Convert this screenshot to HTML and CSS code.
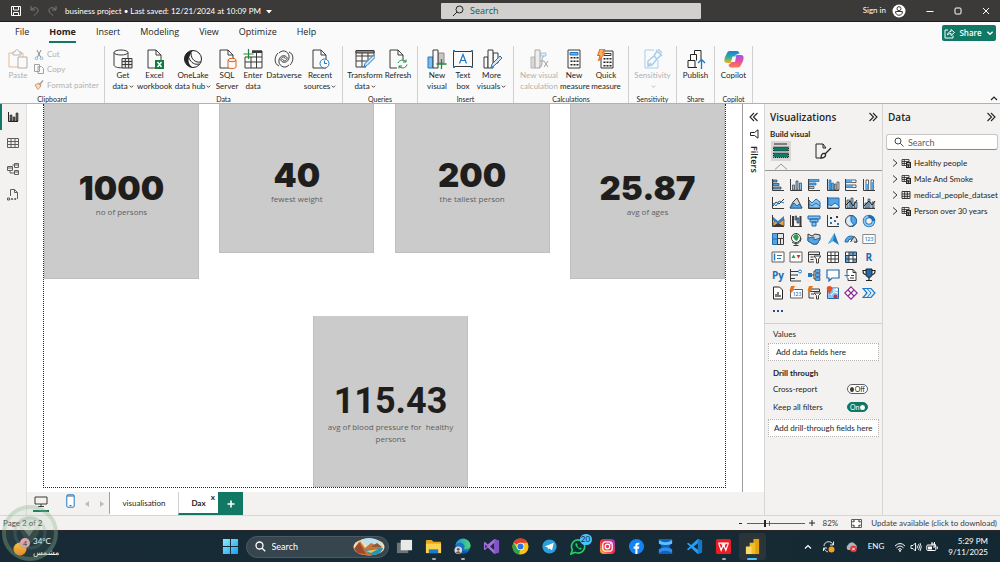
FILE: index.html
```html
<!DOCTYPE html>
<html lang="en">
<head>
<meta charset="utf-8">
<title>business project</title>
<link rel="stylesheet" href="styles.css">
</head>
<body>
<svg class="defs" aria-hidden="true">
  <defs>
    <linearGradient id="gWin" x1="0" y1="0" x2="1" y2="1"><stop offset="0" stop-color="#8fe9ff"/><stop offset="1" stop-color="#1a9ff0"/></linearGradient>
    <linearGradient id="gEdge" x1="0" y1="0" x2="1" y2="0"><stop offset="0" stop-color="#1b8fe0"/><stop offset="1" stop-color="#52d96b"/></linearGradient>
    <linearGradient id="gInsta" x1="0" y1="1" x2="1" y2="0"><stop offset="0" stop-color="#fdc04a"/><stop offset=".45" stop-color="#f2343f"/><stop offset="1" stop-color="#a12fd0"/></linearGradient>
    <linearGradient id="gCoA" x1="0" y1="0" x2="0" y2="1"><stop offset="0" stop-color="#1b7be8"/><stop offset=".5" stop-color="#2fae9a"/><stop offset="1" stop-color="#f4b41a"/></linearGradient>
    <linearGradient id="gCoB" x1="0" y1="0" x2="0" y2="1"><stop offset="0" stop-color="#9a55f5"/><stop offset=".5" stop-color="#e9509c"/><stop offset="1" stop-color="#ff7d45"/></linearGradient>
    <linearGradient id="gSun" x1="0" y1="0" x2="0" y2="1"><stop offset="0" stop-color="#ffc93a"/><stop offset="1" stop-color="#f2821c"/></linearGradient>
    <symbol id="axis" viewBox="0 0 14 14"><path d="M1.5 1v11.5H13" fill="none" stroke="#3b3a39"/></symbol>
    <symbol id="chev" viewBox="0 0 6 6"><path d="M1 2l2 2 2-2" fill="none" stroke="currentColor" stroke-width="1"/></symbol>
    <symbol id="dbl" viewBox="0 0 10 10"><path d="M1.500 1l4 4-4 4M5 1l4 4-4 4" fill="none" stroke="#252423" stroke-width="1.100"/></symbol>
    <symbol id="doc" viewBox="0 0 20 20"><path d="M3 1h8l5 5v13H3zM11 1v5h5" fill="#fafafa" stroke="#3b3a39"/></symbol>
    <symbol id="tree" viewBox="0 0 6 10"><path d="M1 1.500l4 3.500-4 3.500" fill="none" stroke="#3b3a39"/></symbol>
    <symbol id="tbl" viewBox="0 0 10 10"><path d="M1 1.500h8v7H1zM1 4h8M1 6.300h8M3.700 1.500v7M6.300 1.500v7" fill="none" stroke="#252423" stroke-width=".9"/></symbol>
    <symbol id="tblcalc" viewBox="0 0 10 10"><path d="M1 1.500h7v6H1zM1 3.500h7M1 5.500h7M3.300 1.500v6" fill="none" stroke="#252423" stroke-width=".8"/><path d="M5 4h5v6H5z" fill="#252423"/><path d="M6.200 5.500h2.600M6.200 7h1M8 7h1M6.200 8.500h1M8 8.500h1" stroke="#fff" stroke-width=".7"/></symbol>
  </defs>
</svg>

<header class="titlebar">
  <div class="title-left">
    <button class="bare" aria-label="Save"><svg width="12" height="12" viewBox="0 0 12 12" fill="none" stroke="#fff"><path d="M1.500 1.500h9v9h-9zM3.500 1.500v3.500h5V1.500M3.500 10.500V7.500h5v3"/></svg></button>
    <button class="bare" aria-label="Undo"><svg width="11" height="11" viewBox="0 0 11 11" fill="none" stroke="#7d7b79"><path d="M2 1v4h4M2 5c3-4 8-2 7 1-.4 1.500-2 3-4 4.500"/></svg></button>
    <button class="bare" aria-label="Redo"><svg width="11" height="11" viewBox="0 0 11 11" fill="none" stroke="#7d7b79"><path d="M9 1v4H5M9 5C6 1 1 3 2 6c.4 1.500 2 3 4 4.500"/></svg></button>
    <button class="bare file-name">business project • Last saved: 12/21/2024 at 10:09 PM <svg width="6" height="4" viewBox="0 0 6 4"><path d="M0 0h6L3 3.500z" fill="#fff"/></svg></button>
  </div>
  <label class="title-search">
    <svg width="12" height="12" viewBox="0 0 12 12" fill="none" stroke="#252423"><circle cx="7.500" cy="4.500" r="3.500"/><path d="M5 7l-4 4"/></svg>
    <input type="text" placeholder="Search" aria-label="Search">
  </label>
  <div class="title-right">
    <button class="bare signin">Sign in <svg width="14" height="14" viewBox="0 0 14 14"><circle cx="7" cy="7" r="6.500" fill="#fff"/><circle cx="7" cy="4.700" r="2" fill="none" stroke="#3b3a39"/><path d="M3.500 7.500h7c0 5-7 5-7 0z" fill="none" stroke="#3b3a39"/></svg></button>
    <button class="bare" aria-label="Minimize"><svg width="8" height="8" viewBox="0 0 8 8"><path d="M.5 4.500h7" stroke="#fff"/></svg></button>
    <button class="bare" aria-label="Maximize"><svg width="8" height="8" viewBox="0 0 8 8"><rect x="1" y="1" width="6" height="6" rx="1" fill="none" stroke="#fff"/></svg></button>
    <button class="bare" aria-label="Close"><svg width="8" height="8" viewBox="0 0 8 8"><path d="M1 1l6 6M7 1L1 7" stroke="#fff"/></svg></button>
  </div>
</header>

<nav class="menubar">
  <button class="menu">File</button><button class="menu active">Home</button><button class="menu">Insert</button><button class="menu">Modeling</button><button class="menu">View</button><button class="menu">Optimize</button><button class="menu">Help</button>
  <button class="share"><svg width="11" height="11" viewBox="0 0 11 11" fill="none" stroke="#fff"><path d="M4 2H1v8h8V7.500M3.500 7c.3-2.500 2-3.500 3.500-3.500V1.500l3.500 3-3.500 3v-2C5.500 5.500 4.500 6 3.500 7z"/></svg>Share<svg width="8" height="8"><use href="#chev"/></svg></button>
</nav>

<section class="ribbon">
  <div class="group clip">
    <div class="tools">
      <button class="tool off"><svg viewBox="0 0 20 20" fill="none"><path d="M10 18H1V4h4M11 4h4v4" stroke="#e9b98c"/><path d="M5 3h2c0-3 4-3 4 0h2v3H5z" stroke="#b9b7b5"/><path d="M10 8h9v11h-9z" fill="#fafafa" stroke="#b0aeac"/></svg>Paste</button>
      <div class="clip-list">
        <button class="mini"><svg viewBox="0 0 10 10" fill="none"><path d="M3 0l3.500 7M7 0L3.500 7" stroke="#8d8b89"/><circle cx="2.500" cy="8.300" r="1.300" stroke="#7eb4dc"/><circle cx="7.500" cy="8.300" r="1.300" stroke="#7eb4dc"/></svg>Cut</button>
        <button class="mini"><svg viewBox="0 0 10 10" fill="#fafafa" stroke="#a5a3a1"><path d="M.5.500h5v7h-5zM4 2.500h3.500l2 2v5H4z"/></svg>Copy</button>
        <button class="mini"><svg viewBox="0 0 10 10"><path d="M1 5l4-2 2 3-3 3.500z" fill="#f6dcc3" stroke="#dc9a66"/><path d="M5 3.500l2 2M6 4l3-3.500" stroke="#a5a3a1" stroke-width="1.500"/></svg>Format painter</button>
      </div>
    </div>
    <div class="group-name">Clipboard</div>
  </div>
  <div class="group">
    <div class="tools">
      <button class="tool w28"><svg viewBox="0 0 20 20" fill="none" stroke="#3b3a39"><ellipse cx="8" cy="3.500" rx="7" ry="2.500"/><path d="M1 3.500V16c0 2 4 3 8 2.700M15 3.500V9"/><path d="M9 9.500h10v9.500H9z" fill="#e8e6e4"/><path d="M9 12.500h10M9 15.500h10M12.300 9.500V19M15.700 9.500V19"/></svg>Get<br><span>data<svg class="cv"><use href="#chev"/></svg></span></button>
      <button class="tool w35"><svg viewBox="0 0 20 20"><use href="#doc" width="20" height="20"/><path d="M10 11h9v9h-9z" fill="#107c41"/><path d="M12.500 13l4 5M16.500 13l-4 5" stroke="#fff" stroke-width="1.400"/></svg>Excel<br>workbook</button>
      <button class="tool w42"><svg viewBox="0 0 20 20" fill="none"><circle cx="10" cy="10" r="8.500" stroke="#252423"/><path d="M10 1.500C4 2 1 6 1.500 11c1 4 4 7 8 7.500-4-3-5-7-3-11 1-3 2-4.500 3.500-6z" fill="#252423"/><path d="M8 4c0 6 4 10 10 9M6 9c2 5 6 7 10 6" stroke="#252423"/></svg>OneLake<br><span>data hub<svg class="cv"><use href="#chev"/></svg></span></button>
      <button class="tool w26"><svg viewBox="0 0 20 20"><use href="#doc" width="20" height="20"/><path d="M11 11v7c0 2 8 2 8 0v-7" fill="#fafafa" stroke="#d9631e"/><ellipse cx="15" cy="11" rx="4" ry="1.700" fill="#fafafa" stroke="#d9631e"/></svg>SQL<br>Server</button>
      <button class="tool w26"><svg viewBox="0 0 20 20" fill="none"><path d="M2 8v11h17V2H9M2 13h17M2 8h17M8 8v11M13.500 2v17" stroke="#3b3a39"/><path d="M9 1.500h10V4H9z" fill="#3b3a39"/><path d="M5.500 0v10M.5 5h10" stroke="#218739" stroke-width="1.200"/></svg>Enter<br>data</button>
      <button class="tool w36"><svg viewBox="0 0 20 20" fill="none" stroke="#3b3a39"><path d="M5 4c5-5 11 0 10 5-1 6-9 5-8 1 1-3 5-2 4 0"/><path d="M15 16c-5 5-11 0-10-5 1-6 9-5 8-1-1 3-5 2-4 0"/><path d="M15 3c5 2 5 9 1 13M5 17c-5-2-5-9-1-13"/></svg>Dataverse</button>
      <button class="tool w36"><svg viewBox="0 0 20 20"><use href="#doc" width="20" height="20"/><circle cx="14.500" cy="14.500" r="4.500" fill="#fafafa" stroke="#1e79c5"/><path d="M14.500 11.500v3h2.500" fill="none" stroke="#1e79c5"/></svg>Recent<br><span>sources<svg class="cv"><use href="#chev"/></svg></span></button>
    </div>
    <div class="group-name">Data</div>
  </div>
  <div class="group">
    <div class="tools">
      <button class="tool w36"><svg viewBox="0 0 20 20" fill="none"><path d="M11 18H1V2h18v5M1 7h17M1 12h11M7 4v14M13 4v8" stroke="#3b3a39"/><path d="M1 1.500h18V4H1z" fill="#8a8886" stroke="#3b3a39"/><path d="M9 18l1-3.500 8-8 2 2-8 8z" fill="#cfe6f8" stroke="#1e79c5"/></svg>Transform<br><span>data<svg class="cv"><use href="#chev"/></svg></span></button>
      <button class="tool w30"><svg viewBox="0 0 20 20"><path d="M9 19H2V1h8l5 5v5M10 1v5h5" fill="none" stroke="#3b3a39"/><path d="M10 14c1-3 6-4 8-1v-2.500M18 13h-3M19 15.500c-1 4-6 4.500-8 1.500v2.500M11 17h3" fill="none" stroke="#218739"/></svg>Refresh</button>
    </div>
    <div class="group-name">Queries</div>
  </div>
  <div class="group">
    <div class="tools">
      <button class="tool w30"><svg viewBox="0 0 20 20"><path d="M1 8h5v11H1z" fill="#7cbcf0" stroke="#1e79c5"/><path d="M11 4h6v10h-6z" fill="#c8c6c4" stroke="#8a8886"/><path d="M6 1h5v18H6z" fill="#fafafa" stroke="#3b3a39"/><path d="M14.500 10v10M9.500 15h10" stroke="#218739" stroke-width="1.300"/></svg>New<br>visual</button>
      <button class="tool w22"><svg viewBox="0 0 20 20"><path d="M.5 2.500h19v15H.5z" fill="none" stroke="#3b3a39"/><path d="M0 1h2v2H0zM18 1h2v2h-2zM0 17h2v2H0zM18 17h2v2h-2z" fill="#1e79c5"/><path d="M6.500 14.500L10 5.500l3.500 9M8 11.500h4" fill="none" stroke="#1e79c5" stroke-width="1.200"/></svg>Text<br>box</button>
      <button class="tool w35"><svg viewBox="0 0 20 20"><path d="M2 8h4v11H2zM11 4h5v10h-5z" fill="#fafafa" stroke="#3b3a39"/><path d="M6 1h5v18H6z" fill="#fafafa" stroke="#3b3a39"/><path d="M9 18.500l1-3.500 8-8 2 2-8 8z" fill="#cfe6f8" stroke="#1e79c5"/></svg>More<br><span>visuals<svg class="cv"><use href="#chev"/></svg></span></button>
    </div>
    <div class="group-name">Insert</div>
  </div>
  <div class="group">
    <div class="tools">
      <button class="tool w42 off"><svg viewBox="0 0 20 20"><path d="M2 8h4v11H2z" fill="#dcdad8" stroke="#b9b7b5"/><path d="M11 4h6v3h-6z" fill="#dcecf8" stroke="#9cc6e8"/><path d="M6 1h5v18H6z" fill="#eee" stroke="#a9a7a5"/><path d="M15 8c-2-1-2 2-2 4s0 7-3 6M11 12h4M15 12l4 6M19 12l-4 6" fill="none" stroke="#a19f9d"/></svg>New visual<br>calculation</button>
      <button class="tool w28"><svg viewBox="0 0 20 20"><path d="M4 1h12v18H4z" fill="#fafafa" stroke="#3b3a39"/><path d="M6 3.500h8v2.500H6z" fill="#6db4ee" stroke="#1e79c5"/><path d="M7.500 8v9M10.500 8v9M13.500 8v9" stroke="#252423" stroke-width="2" stroke-dasharray="1.500 2"/></svg>New<br>measure</button>
      <button class="tool w36"><svg viewBox="0 0 20 20"><path d="M5 2h12v17H5z" fill="#fafafa" stroke="#3b3a39"/><path d="M8 4.500h7v2H8z" fill="#fafafa" stroke="#3b3a39"/><path d="M8.500 9v9M11.500 9v9M14.500 9v9" stroke="#252423" stroke-width="2" stroke-dasharray="1.500 2"/><path d="M4 0h5L6.500 4H9L2.500 12 4 6.500H1.500z" fill="#fbb05a" stroke="#d9631e"/></svg>Quick<br>measure</button>
    </div>
    <div class="group-name">Calculations</div>
  </div>
  <div class="group w47">
    <div class="tools"><button class="tool w42 off"><svg viewBox="0 0 20 20" fill="none" stroke="#a8cdea"><path d="M11 1H2v18h13v-8"/><path d="M5 12l6-5 3 3-5 6-4 1zM6 16l2-2M11 7l3-5 4 4-4 4M13 1l6 6M15 0l4 4" stroke-width="1.500"/></svg>Sensitivity<br><svg class="cv"><use href="#chev"/></svg></button></div>
    <div class="group-name">Sensitivity</div>
  </div>
  <div class="group w37">
    <div class="tools"><button class="tool w36"><svg viewBox="0 0 20 20" fill="none" stroke="#252423"><path d="M11 18.500H2v-7h7v7M4.500 11.500v-6h6v6M8.500 5.500v-4H15v9"/><path d="M15.500 20v-9M12 14l3.500-3.500L19 14" stroke="#1e79c5" stroke-width="1.300"/></svg>Publish</button></div>
    <div class="group-name">Share</div>
  </div>
  <div class="group w37">
    <div class="tools"><button class="tool w36"><svg viewBox="0 0 20 20"><path d="M6 2h7c1.500 0 2 1 2.500 2.500l-3 1C10 7 9 14 7 14H3C0 14 0 11 1 8l2-4c.5-1.300 1.500-2 3-2z" fill="url(#gCoA)"/><path d="M14 18.500H7c-1.500 0-2-1-2.500-2.500L7 14c3-1 4-8 6-8h4c3 0 3 3 2 6l-2 4c-.5 1.500-1.500 2.500-3 2.500z" fill="url(#gCoB)"/><path d="M8.500 7.500h3.500l-1 5.500H7z" fill="#fafafa"/></svg>Copilot</button></div>
    <div class="group-name">Copilot</div>
  </div>
  <button class="bare collapse" aria-label="Collapse ribbon"><svg width="8" height="6" viewBox="0 0 8 6"><path d="M1 5l3-3 3 3" fill="none" stroke="#252423" stroke-width="1.200"/></svg></button>
</section>

<main class="workspace">
  <nav class="views">
    <button class="view on" aria-label="Report view"><svg viewBox="0 0 12 12"><path d="M1.500 1v9.500H11" stroke="#252423" fill="none"/><path d="M3 4h2v6H3zM6 6h2v4H6zM9 2h2v8H9z" fill="#605e5c" stroke="#252423" stroke-width=".6"/></svg></button>
    <button class="view" aria-label="Table view"><svg viewBox="0 0 12 12" fill="none" stroke="#605e5c"><path d="M.5 1.500h11v9H.5zM.5 4.500h11M.5 7.500h11M4 1.500v9M8 1.500v9"/></svg></button>
    <button class="view" aria-label="Model view"><svg viewBox="0 0 12 12" fill="none" stroke="#605e5c"><path d="M.5 3.500h5v4h-5zM7.500.500h4v4h-4zM7.500 7.500h4v4h-4zM3 7.500V10h4.500M5.500 2h2M.5 5h5M7.500 2h4M7.500 9h4"/></svg></button>
    <button class="view" aria-label="DAX query view"><svg viewBox="0 0 12 12" fill="none" stroke="#605e5c"><path d="M3.500 7V.5h4l3 3V10M7.500.500v3h3M.5 9h2v2h-2zM4 11l1-2 1 2M7.500 9l1.500 2M9 9l-1.500 2"/></svg></button>
  </nav>
  <div class="center">
    <div class="stage">
      <div class="canvas">
        <div class="report">
          <div class="card-row">
            <article class="card tall"><strong>1000</strong><p>no of persons</p></article>
            <article class="card"><strong>40</strong><p>fewest weight</p></article>
            <article class="card"><strong>200</strong><p>the tallest person</p></article>
            <article class="card tall"><strong>25.87</strong><p>avg of ages</p></article>
          </div>
          <article class="card lower"><strong class="din">115.43</strong><p>avg of blood pressure for&nbsp; healthy persons</p></article>
        </div>
      </div>
      <aside class="filters">
        <button class="bare" aria-label="Expand filters"><svg class="flip" width="10" height="10"><use href="#dbl"/></svg></button>
        <svg width="10" height="10" viewBox="0 0 10 10"><path d="M9 .8v8.400L5.500 6.500H1.500v-3h4z" fill="none" stroke="#252423"/></svg>
        <span>Filters</span>
      </aside>
    </div>
    <div class="tabs">
      <button class="bare device on" aria-label="Desktop layout"><svg width="14" height="11" viewBox="0 0 14 11" fill="none" stroke="#3b3a39"><path d="M1 1h12v7H1zM7 8v2M4 10.500h6"/></svg></button>
      <button class="bare device" aria-label="Mobile layout"><svg width="9" height="14" viewBox="0 0 9 14"><rect x=".8" y=".8" width="7.400" height="12.400" rx="1" fill="#fff" stroke="#1e79c5"/><path d="M1 2h7" stroke="#605e5c"/><path d="M3.500 11.500h2" stroke="#605e5c"/></svg></button>
      <button class="bare arrow" aria-label="Previous page"><svg width="4" height="6" viewBox="0 0 4 6"><path d="M4 0v6L0 3z" fill="#bebbb8"/></svg></button>
      <button class="bare arrow" aria-label="Next page"><svg width="4" height="6" viewBox="0 0 4 6"><path d="M0 0v6l4-3z" fill="#bebbb8"/></svg></button>
      <button class="tab">visualisation</button>
      <button class="tab current">Dax<span class="x">x</span></button>
      <button class="add" aria-label="New page"><svg width="8" height="8" viewBox="0 0 8 8"><path d="M4 .5v7M.5 4h7" stroke="#fff" stroke-width="1.600"/></svg></button>
    </div>
  </div>

  <aside class="viz">
    <div class="pane-head"><h2>Visualizations</h2><button class="bare" aria-label="Collapse pane"><svg width="10" height="10"><use href="#dbl"/></svg></button></div>
    <h3>Build visual</h3>
    <div class="modes">
      <button class="mode on" aria-label="Build visual"><svg width="18" height="18" viewBox="0 0 18 18"><path d="M2 2h13" stroke="#252423"/><path d="M1.500 5h15v4h-15zM1.500 11h15v4.500h-15z" fill="#117865" stroke="#252423" stroke-dasharray="1 1"/></svg></button>
      <button class="mode" aria-label="Format"><svg width="18" height="18" viewBox="0 0 18 18" fill="none" stroke="#252423"><path d="M7 16H2V2h7l3 4M9 2v4h3"/><path d="M17 6l-6 6M7 16c0-3 1.500-5 3.500-4.500S12 16 7 16z" stroke-width="1.300"/></svg></button>
    </div>
    <div class="rule"><svg width="12" height="7" viewBox="0 0 12 7"><path d="M0 6.500L6 1l6 5.500" fill="#f3f2f1" stroke="#979593"/></svg></div>
    <div class="gallery">
      <button aria-label="Stacked bar"><svg viewBox="0 0 14 14"><use href="#axis"/><path d="M2 2h4v2H2zM2 5.500h6v2H2zM2 9h8v2H2z" fill="#57a6e4" stroke="#3b3a39" stroke-width=".7"/></svg></button>
      <button aria-label="Stacked column"><svg viewBox="0 0 14 14"><use href="#axis"/><path d="M3.500 7h2v5h-2zM7 3h2v9H7zM10.500 5h2v7h-2z" fill="#8cc3ee" stroke="#3b3a39" stroke-width=".7"/></svg></button>
      <button aria-label="Clustered bar"><svg viewBox="0 0 14 14"><use href="#axis"/><path d="M2 1.500h10v2H2zM2 5h7v2H2z" fill="#57a6e4" stroke="#1e6bb0" stroke-width=".7"/><path d="M2 8.500h5v2H2z" fill="#c8c6c4" stroke="#3b3a39" stroke-width=".7"/></svg></button>
      <button aria-label="Clustered column"><svg viewBox="0 0 14 14"><use href="#axis"/><path d="M3 2h2v10H3zM5.500 5h2v7h-2z" fill="#57a6e4" stroke="#1e6bb0" stroke-width=".7"/><path d="M8.500 6h1.500v6H8.500zM11 4h2v8h-2z" fill="#d8d6d4" stroke="#3b3a39" stroke-width=".7"/></svg></button>
      <button aria-label="100% bar"><svg viewBox="0 0 14 14"><use href="#axis"/><path d="M2 2h10v2.500H2zM2 7h10v2.500H2z" fill="#fff" stroke="#3b3a39" stroke-width=".8"/><path d="M2 2h6v2.500H2zM2 7h7v2.500H2z" fill="#57a6e4"/></svg></button>
      <button aria-label="100% column"><svg viewBox="0 0 14 14"><use href="#axis"/><path d="M4 2h2.500v10H4zM9 2h2.500v10H9z" fill="#fff" stroke="#3b3a39" stroke-width=".8"/><path d="M4 6h2.500v6H4zM9 4h2.500v8H9z" fill="#57a6e4"/></svg></button>
      <button aria-label="Line"><svg viewBox="0 0 14 14"><use href="#axis"/><path d="M2 10l3-4 3 2 5-5" fill="none" stroke="#3b3a39"/><path d="M2 7l3 3 3-5 5 2" fill="none" stroke="#1e79c5"/></svg></button>
      <button aria-label="Area"><svg viewBox="0 0 14 14"><path d="M1 12l3-6 4-4 5 10z" fill="#d8d6d4" stroke="#3b3a39"/><path d="M1 12l4-5 3 3 2-2 3 4z" fill="#57a6e4" stroke="#1e6bb0"/></svg></button>
      <button aria-label="Stacked area"><svg viewBox="0 0 14 14"><path d="M2 4l3 3 4-4 4 3v6H2z" fill="#8cc3ee" stroke="#1e6bb0"/><path d="M2 8l3 2 4-3 4 3" fill="none" stroke="#1e6bb0"/><use href="#axis"/></svg></button>
      <button aria-label="100% area"><svg viewBox="0 0 14 14"><path d="M2 2h11v10H2z" fill="#57a6e4" stroke="#1e6bb0"/><path d="M2 8l3 2 4-3 4 3v2H2z" fill="#d9ecfa" stroke="#1e6bb0"/><use href="#axis"/></svg></button>
      <button aria-label="Line and stacked column"><svg viewBox="0 0 14 14"><use href="#axis"/><path d="M3 4h3v8H3zM7 2h2v10H7zM10.500 6H13v6h-2.500z" fill="#8cc3ee" stroke="#3b3a39" stroke-width=".7"/><path d="M2 9l4-4 3 5 4-6" fill="none" stroke="#252423"/></svg></button>
      <button aria-label="Line and clustered column"><svg viewBox="0 0 14 14"><use href="#axis"/><path d="M3 7h2v5H3zM6 3h2v9H6zM10 6h2v6h-2z" fill="#8cc3ee" stroke="#3b3a39" stroke-width=".7"/><path d="M2 10l5-5 3 4 3-4" fill="none" stroke="#252423"/></svg></button>
      <button aria-label="Ribbon"><svg viewBox="0 0 14 14"><path d="M2 3l5 5 6-5v4l-6 4-5-4z" fill="#57a6e4"/><path d="M2 10l2.500-4L8 9l5-4v7H2z" fill="#f0a04b" stroke="#3b3a39" stroke-width=".7"/><path d="M2 3l5 4 6-5v3L7 10 2 6z" fill="#3b7fbe"/><path d="M2 12l5-3 6 3z" fill="#3b3a39"/><use href="#axis"/></svg></button>
      <button aria-label="Waterfall"><svg viewBox="0 0 14 14"><use href="#axis"/><path d="M3 2h2v10H3zM10.500 2h2v10h-2z" fill="#3b3a39"/><path d="M6 2h1.500v4H6zM8 4h2v5H8z" fill="#57a6e4" stroke="#3b3a39" stroke-width=".7"/></svg></button>
      <button aria-label="Funnel"><svg viewBox="0 0 14 14" fill="#8cc3ee" stroke="#1e6bb0"><path d="M1 2h12v3H1zM3 5h8v3H3zM5 8h4v4H5z"/></svg></button>
      <button aria-label="Scatter"><svg viewBox="0 0 14 14"><use href="#axis"/><path d="M4 8h2v2H4zM8 6h2v2H8zM11 9h2v2h-2z" fill="#1e79c5"/><path d="M4 3h2v2H4zM10 2h2v2h-2z" fill="#3b3a39"/></svg></button>
      <button aria-label="Pie"><svg viewBox="0 0 14 14"><circle cx="7" cy="7" r="5.500" fill="#d9ecfa" stroke="#3b3a39"/><path d="M7 1.500a5.500 5.500 0 010 11L10 11 7 7z" fill="#57a6e4" stroke="#1e6bb0"/></svg></button>
      <button aria-label="Donut"><svg viewBox="0 0 14 14"><circle cx="7" cy="7" r="4.500" fill="none" stroke="#1e6bb0" stroke-width="3.500"/><circle cx="7" cy="7" r="4.500" fill="none" stroke="#8cc3ee" stroke-width="2" stroke-dasharray="20 9"/></svg></button>
      <button aria-label="Treemap"><svg viewBox="0 0 14 14"><path d="M1.500 1.500h5v11h-5z" fill="#57a6e4" stroke="#1e6bb0"/><path d="M6.500 1.500h6v5h-6zM6.500 6.500h3v6h-3zM9.500 6.500h3v6h-3z" fill="#e8e6e4" stroke="#3b3a39"/><path d="M1.500 7h5" stroke="#1e6bb0"/></svg></button>
      <button aria-label="Map"><svg viewBox="0 0 14 14"><circle cx="7" cy="6" r="4.500" fill="#fff" stroke="#3b3a39"/><path d="M5 3l3-1 2 3-2 4-2-1-2-3z" fill="#2e9b4e"/><path d="M3 10c3 3 9 2 9-4M7 12v1.500M4.500 13.500h5" fill="none" stroke="#3b3a39"/></svg></button>
      <button aria-label="Filled map"><svg viewBox="0 0 14 14"><path d="M1 2l4 2 3-2 5 1v4l-3 5H6L1 9z" fill="#d8d6d4" stroke="#3b3a39"/><path d="M1 6l6-1v3l6-2v1l-3 5H6L1 9z" fill="#57a6e4" stroke="#1e6bb0"/></svg></button>
      <button aria-label="Azure map"><svg viewBox="0 0 14 14"><path d="M8.500 1L13 13 7 9l-5 3z" fill="#1e79c5"/><path d="M8.500 1L2 12l5-3z" fill="#57b4ea"/></svg></button>
      <button aria-label="Gauge"><svg viewBox="0 0 14 14"><path d="M1 10a6 6 0 0112 0h-3a3 3 0 00-6 0z" fill="#57a6e4" stroke="#1e6bb0"/><path d="M6.500 10L10 4.500a6 6 0 013 5.500h-3" fill="#d8d6d4" stroke="#3b3a39"/></svg></button>
      <button aria-label="Card"><svg viewBox="0 0 14 14"><path d="M.8 2.500h12.400v9H.8z" fill="#fff" stroke="#8a8886"/><text x="7" y="9.300" class="t123">123</text></svg></button>
      <button aria-label="Multi-row card"><svg viewBox="0 0 14 14"><path d="M1 2h12v10H1z" fill="#fff" stroke="#605e5c"/><path d="M3.500 3.500v7" stroke="#1e79c5" stroke-width="1.500"/><path d="M6 5.500h5M6 8.500h4" stroke="#1e79c5"/></svg></button>
      <button aria-label="KPI"><svg viewBox="0 0 14 14"><path d="M1 2h12v10H1z" fill="#fff" stroke="#605e5c"/><path d="M2.500 8L4.500 4.500 6.500 8z" fill="#2e9b4e"/><path d="M7.500 5h4l-2 3.500z" fill="#d13438"/></svg></button>
      <button aria-label="Slicer"><svg viewBox="0 0 14 14"><path d="M7 12H1.500V2h11v3M1.500 4.500h11M3.500 7h3M3.500 9.500h3" fill="none" stroke="#3b3a39"/><path d="M7 6h7l-2.500 3v4h-2V9z" fill="#fff" stroke="#3b3a39"/></svg></button>
      <button aria-label="Table"><svg viewBox="0 0 14 14" fill="#fff" stroke="#3b3a39"><path d="M1.500 2h11v10.500h-11zM1.500 5.500h11M1.500 9h11M5 2v10.500M9 2v10.500"/></svg></button>
      <button aria-label="Matrix"><svg viewBox="0 0 14 14"><path d="M1.500 2h11v10.500h-11z" fill="#fff"/><path d="M5 2h7.500v3.500H5zM1.500 5.500H5v7H1.500zM9 9h3.500v3.500H9z" fill="#57a6e4"/><path d="M1.500 2h11v10.500h-11zM1.500 5.500h11M1.500 9h11M5 2v10.500M9 2v10.500" fill="none" stroke="#3b3a39"/></svg></button>
      <button class="letter">R</button>
      <button class="letter">Py</button>
      <button aria-label="Key influencers"><svg viewBox="0 0 14 14"><path d="M1.500 1v12M2 3.500h8M2 7h5M2 10.500h4" fill="none" stroke="#3b3a39"/><circle cx="11" cy="3.500" r="1.500" fill="#fff" stroke="#1e79c5"/><circle cx="8" cy="7" r="1" fill="#1e79c5"/><path d="M1.500 13H12" stroke="#3b3a39"/></svg></button>
      <button aria-label="Decomposition tree"><svg viewBox="0 0 14 14"><path d="M4 7h3M8 3H7v8h1" fill="none" stroke="#3b3a39"/><path d="M1 5h4v4H1z" fill="#1e79c5"/><path d="M8.500 1.500H13v3H8.500zM8.500 5.500H13v3H8.500zM8.500 9.500H13v3H8.500z" fill="#57a6e4" stroke="#24508f" stroke-width=".7"/></svg></button>
      <button aria-label="Q&amp;A"><svg viewBox="0 0 14 14"><path d="M1 2h12v8H6l-3 3v-3H1z" fill="#fff" stroke="#1e6bb0" stroke-width="1.200"/></svg></button>
      <button aria-label="Narrative"><svg viewBox="0 0 14 14"><path d="M3 5V1.500h6l3 3v8H4V10M9 1.500v3h3" fill="#fff" stroke="#3b3a39"/><path d="M7 7.500h3M6 10h4" stroke="#3b3a39"/><path d="M3 5v5M.5 7.500h5" stroke="#1e79c5"/></svg></button>
      <button aria-label="Goals"><svg viewBox="0 0 14 14"><path d="M4 1h6v6c0 3-6 3-6 0z" fill="#1e6bb0" stroke="#252423"/><path d="M4 2.500H1c0 3 1 4 3 4M10 2.500h3c0 3-1 4-3 4M7 9v3M4 12.500h6" fill="none" stroke="#252423" stroke-width="1.200"/></svg></button>
      <button aria-label="Paginated report"><svg viewBox="0 0 14 14"><path d="M2.500 1h6l3 3v9h-9z" fill="#fff" stroke="#252423"/><path d="M5 11V8M7 11V6M9 11V9" stroke="#252423" stroke-width="1.200"/></svg></button>
      <button aria-label="Card (new)"><svg viewBox="0 0 14 14"><path d="M1.500 3.500h12v8.500h-12z" fill="#fff" stroke="#605e5c"/><text x="8" y="10.300" class="t123">123</text><path d="M2 0h4L4.500 3H6L1 8l1-3.500H.5z" fill="#e8761e"/></svg></button>
      <button aria-label="Slicer (new)"><svg viewBox="0 0 14 14"><path d="M7 12H2V3h10.500v3M2 5.500h10M4 8h3" fill="none" stroke="#3b3a39"/><path d="M7 7h7l-2.500 2.500V13h-2V9.500z" fill="#fff" stroke="#3b3a39"/><path d="M2 0h4L4.500 3H6L1 8l1-3.500H.5z" fill="#e8761e"/></svg></button>
      <button aria-label="ArcGIS"><svg viewBox="0 0 14 14"><path d="M1.500 2h11v10.500h-11z" fill="#8cc3ee" stroke="#1e6bb0"/><path d="M5 9l3-3 4 1M8 6V2" fill="none" stroke="#fff"/><path d="M3.500 0a2.800 2.800 0 012.800 2.800Q6 5 3.500 8 1 5 .7 2.800A2.800 2.800 0 013.500 0z" fill="#e0532a"/><circle cx="9.500" cy="10.500" r="2" fill="#d13438"/><circle cx="10.500" cy="3.500" r="1.500" fill="#fff"/></svg></button>
      <button aria-label="Power Apps"><svg viewBox="0 0 14 14"><path d="M7 .8L13.200 7 7 13.200.800 7z" fill="#fff" stroke="#8b2a8f" stroke-width="1.200"/><path d="M4 4l6 6M10 4l-6 6" stroke="#8b2a8f" stroke-width="1.200"/></svg></button>
      <button aria-label="Power Automate"><svg viewBox="0 0 14 14"><path d="M1 2.500h8L13 7l-4 4.500H1L5 7z" fill="#d9ecfa" stroke="#1e79c5" stroke-width="1.200"/><path d="M5 2.500L9 7l-4 4.500" fill="none" stroke="#1e79c5"/></svg></button>
      <button aria-label="More visuals"><svg viewBox="0 0 14 14" fill="#24508f"><path d="M2 6h2v2H2zM6 6h2v2H6zM10 6h2v2h-2z"/></svg></button>
    </div>
    <div class="wells">
      <h4>Values</h4>
      <div class="well inset">Add data fields here</div>
      <h4 class="drill">Drill through</h4>
      <label class="switch">Cross-report<input type="checkbox"></label>
      <label class="switch">Keep all filters<input type="checkbox" checked></label>
      <div class="well">Add drill-through fields here</div>
    </div>
  </aside>

  <aside class="data">
    <div class="pane-head"><h2>Data</h2><button class="bare" aria-label="Collapse pane"><svg width="10" height="10"><use href="#dbl"/></svg></button></div>
    <label class="data-search"><svg width="10" height="10" viewBox="0 0 10 10" fill="none" stroke="#484644"><circle cx="4" cy="4" r="3"/><path d="M6.300 6.300L9.500 9.500"/></svg><input type="text" placeholder="Search" aria-label="Search fields"></label>
    <ul>
      <li><svg width="6" height="10"><use href="#tree"/></svg><svg width="10" height="10"><use href="#tblcalc"/></svg>Healthy people</li>
      <li><svg width="6" height="10"><use href="#tree"/></svg><svg width="10" height="10"><use href="#tblcalc"/></svg>Male And Smoke</li>
      <li><svg width="6" height="10"><use href="#tree"/></svg><svg width="10" height="10"><use href="#tbl"/></svg>medical_people_dataset</li>
      <li><svg width="6" height="10"><use href="#tree"/></svg><svg width="10" height="10"><use href="#tblcalc"/></svg>Person over 30 years</li>
    </ul>
  </aside>
</main>

<div class="status">
  <span>Page 2 of 2</span>
  <div class="zoom">
    <button class="bare" aria-label="Zoom out"><svg width="5" height="5" viewBox="0 0 5 5"><path d="M1 2.500h3" stroke="#252423"/></svg></button>
    <input type="range" min="10" max="220" value="75" aria-label="Zoom">
    <button class="bare" aria-label="Zoom in"><svg width="6" height="6" viewBox="0 0 6 6"><path d="M0 3h6M3 0v6" stroke="#252423"/></svg></button>
    <span class="pct">82%</span>
    <button class="bare fit" aria-label="Fit to page"><svg width="11" height="9" viewBox="0 0 11 9"><path d="M.5.500h10v8H.5z" fill="#fff" stroke="#605e5c"/><path d="M2 3.500V2h2M7 2h2v1.500M9 5.500V7H7M4 7H2V5.500" fill="none" stroke="#252423"/></svg></button>
    <button class="bare update">Update available (click to download)</button>
  </div>
</div>

<footer class="taskbar">
  <button class="bare weather">
    <svg width="18" height="18" viewBox="0 0 18 18"><circle cx="7" cy="11" r="6.500" fill="url(#gSun)"/><circle cx="12" cy="5" r="5" fill="#f3a3b0"/><text x="12" y="7.700" class="badge4">4</text></svg>
    <span class="wx">34°C<br><span lang="ar">مشمس</span></span>
  </button>
  <div class="apps">
    <button class="app" aria-label="Start"><svg viewBox="0 0 18 18" fill="url(#gWin)"><path d="M1 1h7.500v7.500H1zM9.500 1H17v7.500H9.500zM1 9.500h7.500V17H1zM9.500 9.500H17V17H9.500z"/></svg></button>
    <label class="task-search"><svg width="11" height="11" viewBox="0 0 11 11" fill="none" stroke="#fff" stroke-width="1.300"><circle cx="4.500" cy="4.500" r="3.500"/><path d="M7.200 7.200l3 3"/></svg><input type="text" placeholder="Search" aria-label="Search Windows">
      <svg width="32" height="18" viewBox="0 0 32 18"><ellipse cx="16" cy="9" rx="15.500" ry="8.500" fill="#f3dcae"/><path d="M8 2q8-4 16 0l6 6-14 1z" fill="#bfe0ee"/><path d="M2 13L7 3l5 7 6-5 12 5-4 5q-10 4-20 1z" fill="#c9743c"/><path d="M1 11L6 4l7 12-8-1z" fill="#9b4a2a"/><path d="M12 12l18-2q-1 5-8 7-6 0-10-5z" fill="#2196b5"/><path d="M18 9l6-4 5 4z" fill="#8a5a3a"/><path d="M13 13l12-2-7 4z" fill="#f2c14e"/></svg></label>
    <button class="app" aria-label="Task view"><svg viewBox="0 0 18 18"><path d="M1 5h12v11H1z" fill="#6f7376"/><path d="M5 2h12v11H5z" fill="#e9e9e9"/></svg></button>
    <button class="app run" aria-label="File Explorer"><svg viewBox="0 0 18 18"><path d="M1 3q0-1 1-1h5l2 2h7q1 0 1 1v10q0 1-1 1H1z" fill="#e7a61c"/><path d="M1 6h16v10H1z" fill="#fdd24e"/><path d="M4 12h10v4H4z" fill="#1b7bd0"/></svg></button>
    <button class="app run" aria-label="Edge"><svg viewBox="0 0 18 18"><circle cx="9.500" cy="8.500" r="8" fill="#1775c5"/><path d="M1.500 8C3-1 16-2 17.500 8c0 4-6 5-7 3 2-3-1-6-4-6-2 0-4 1-5 3z" fill="url(#gEdge)"/><path d="M6 9c-1 4 3 7 8 6" stroke="#0c59a4" stroke-width="2" fill="none"/><circle cx="4.500" cy="13" r="4" fill="#d8d8d8"/><circle cx="4.500" cy="12" r="1.500" fill="#6b5b52"/><path d="M2 15.500q2.500-3 5 0-2.500 2-5 0z" fill="#6b5b52"/></svg></button>
    <button class="app" aria-label="Visual Studio"><svg viewBox="0 0 18 18"><path d="M12 1l5 2v12l-5 2-7-7-3 3-1-1V5l1-1 3 3z" fill="#a56de0"/><path d="M12 5v8L7.500 9zM2.500 7v4l2-2z" fill="#1a2c38"/><path d="M12 1l5 2v12l-5 2z" fill="#8553c8"/></svg></button>
    <button class="app" aria-label="Chrome"><svg viewBox="0 0 18 18"><circle cx="9" cy="9" r="8.500" fill="#fbc116"/><path d="M9 9L1.600 4.800A8.500 8.500 0 0116.400 4.800L16.500 5H9z" fill="#e33b2e"/><path d="M9 9l-1.500 8.400A8.500 8.500 0 011.600 4.800L5.500 11z" fill="#2ba24c"/><circle cx="9" cy="9" r="4" fill="#fff"/><circle cx="9" cy="9" r="3.200" fill="#2a76e8"/></svg></button>
    <button class="app" aria-label="Telegram"><svg viewBox="0 0 18 18"><circle cx="9" cy="9" r="7.500" fill="#2ba0dc"/><path d="M4 9l9.500-4-1.800 8-3-2.200-1.200 1.400-.5-2.500z" fill="#fff"/></svg></button>
    <button class="app" aria-label="WhatsApp"><svg viewBox="0 0 18 18"><path d="M1 17l1.500-4.500A7 7 0 119 16q-1.800 0-3.500-.8z" fill="#12303a" stroke="#25d366" stroke-width="1.700"/><path d="M6 5.500q-1 1.500.5 3.500t4.500 3.500l1.500-1.500-1.500-1-1 .8q-1.500-.8-2.500-2.500l.7-.8L7 5.500z" fill="#25d366"/></svg><span class="count">20</span></button>
    <button class="app" aria-label="Instagram"><svg viewBox="0 0 18 18"><rect x="1" y="1" width="16" height="16" rx="4" fill="url(#gInsta)"/><g fill="none" stroke="#fff" stroke-width="1.300"><rect x="4" y="4" width="10" height="10" rx="3"/><circle cx="9" cy="9" r="2.400"/></g><circle cx="12" cy="6" r=".8" fill="#fff"/></svg></button>
    <button class="app" aria-label="Facebook"><svg viewBox="0 0 18 18"><circle cx="9" cy="9" r="8" fill="#1483f5"/><path d="M7.800 17v-5.500H6V9h1.800V7.500Q7.800 4.500 12 5v2q-2-.2-2 1v1h2l-.4 2.500H10V17z" fill="#fff"/></svg></button>
    <button class="app" aria-label="Mail"><svg viewBox="0 0 18 18"><path d="M2 1h14v4l-3 4 3 4v4H2v-4l3-4-3-4z" fill="#0e62c4"/><path d="M2 2q7 5 14 0v4Q9 9 2 6z" fill="#5ec1f7"/><path d="M2 16q7-5 14 0v-4Q9 8 2 12z" fill="#2f8fe8"/></svg></button>
    <button class="app" aria-label="VS Code"><svg viewBox="0 0 18 18"><path d="M12.500 1L17 3v12l-4.500 2-7-6.300L2.500 13 1 12l3.300-3L1 6l1.500-1 3 2.300zM12.700 5.500L8 9l4.700 3.500z" fill="#2a9df0" fill-rule="evenodd"/><path d="M12.500 1L17 3v12l-4.500 2z" fill="#1279c9"/></svg></button>
    <button class="app run" aria-label="WPS Office"><svg viewBox="0 0 18 18"><rect x="1" y="1" width="16" height="16" rx="2" fill="#ec1c24"/><path d="M3.500 5.500h11M4 6l2.500 7 2.500-6 2.500 6L14 6M7 6l2 3 2-3" fill="none" stroke="#fff" stroke-width="1.300"/></svg></button>
    <button class="app open" aria-label="Power BI"><svg viewBox="0 0 18 18"><path d="M10 1h6v16h-6z" fill="#e0a010"/><path d="M6 5h6v12H6z" fill="#f0bd27"/><path d="M2 9h6v8H2z" fill="#fbdc6b"/></svg></button>
  </div>
  <div class="tray">
    <button class="bare" aria-label="Hidden icons"><svg width="8" height="6" viewBox="0 0 8 6"><path d="M1 4.500l3-3 3 3" fill="none" stroke="#fff" stroke-width="1.200"/></svg></button>
    <button class="bare" aria-label="Update"><svg width="13" height="13" viewBox="0 0 13 13" fill="none" stroke="#e8e8e8"><path d="M2 6c0-5 8-6 9-1M11.500 1.500V5H8M1.500 11V8H5M2 8c1 3 2 3 4 4"/><circle cx="9.500" cy="9.500" r="3" fill="#f6a21c" stroke="none"/></svg></button>
    <button class="bare" aria-label="OneDrive"><svg width="13" height="13" viewBox="0 0 13 13"><path d="M3 10a3 3 0 010-5 4 4 0 017-1q2 1 2 4l-3 2z" fill="#aeb4b8"/><circle cx="8.500" cy="9" r="3.300" fill="#e02f34"/><path d="M7.200 7.700l2.600 2.600M9.800 7.700l-2.600 2.600" stroke="#fff"/></svg></button>
    <span class="lang">ENG</span>
    <span class="sys">
      <svg width="12" height="10" viewBox="0 0 12 10" fill="none" stroke="#fff"><path d="M1 4q5-5 10 0M2.500 5.800q3.500-3.500 7 0M4.200 7.500q1.800-1.800 3.600 0"/><circle cx="6" cy="8.800" r=".6" fill="#fff"/></svg>
      <svg width="12" height="10" viewBox="0 0 12 10" fill="none" stroke="#fff"><path d="M1 3.500h2l2.500-2.500v8L3 6.500H1zM7 3.500q1 1.500 0 3M8.500 2q2 3 0 6M10 1q2.500 4 0 8" stroke-width=".9"/></svg>
      <svg width="12" height="10" viewBox="0 0 12 10"><rect x=".8" y="3" width="9" height="5.500" rx="1" fill="none" stroke="#fff"/><path d="M2 4.500h4v3H2z" fill="#fff"/><path d="M6 0v3M8.500 0v3M5.500 2h3.500v3H7" stroke="#fff" fill="none"/><path d="M11.300 4.500v2.500" stroke="#fff"/></svg>
    </span>
    <span class="clock">5:29 PM<br>9/11/2025</span>
  </div>
</footer>

<svg class="watermark" width="58" height="58" viewBox="0 0 58 58" fill="none" aria-hidden="true"><circle cx="29" cy="29" r="28" fill="#8fb58a" fill-opacity=".12"/><circle cx="29" cy="29" r="26" stroke="#8fb58a" stroke-opacity=".3" stroke-width="4"/><circle cx="29" cy="29" r="15" stroke="#7d9a9a" stroke-opacity=".22" stroke-width="3"/><path d="M18 16q11-8 22 0 0 16-11 24-11-8-11-24z" fill="#7fae84" fill-opacity=".18"/><path d="M21 20l7 9 9-13" stroke="#fff" stroke-opacity=".25" stroke-width="4"/></svg>
</body>
</html>
```

FILE: styles.css
```css
* { box-sizing: border-box; }
body {
  margin: 0;
  min-height: 100vh;
  display: grid;
  grid-template-rows: 22px 22px 60px 1fr 15px 32px;
  grid-template-columns: minmax(0, 1fr);
  font: 8px/11px Lato, "Open Sans", sans-serif;
  color: #252423;
  background: #f3f2f1;
}
.defs { position: absolute; width: 0; height: 0; }
button, input { font: inherit; color: inherit; }
button { border: 0; padding: 0; background: none; white-space: nowrap; }
svg { flex: none; }
h2, h3, h4, p, ul { margin: 0; padding: 0; }
.bare { display: inline-flex; align-items: center; justify-content: center; }

/* Title bar */
.titlebar { display: grid; grid-template-columns: 59fr 260px 40fr; align-items: center; background: #3b3a39; color: #fff; border-bottom: 1px solid #1d1c1b; }
.title-left { display: flex; align-items: center; gap: 7px; padding-left: 10px; }
.file-name { gap: 5px; padding-top: 2px; }
.title-search { display: flex; align-items: center; gap: 6px; height: 16px; padding-left: 11px; background: #d2d0ce; border-radius: 1px; }
.title-search input { flex: 1; min-width: 0; padding: 0; border: 0; outline: 0; background: none; font: 9px/12px "Open Sans", sans-serif; }
.title-search input::placeholder { color: #185a4c; opacity: 1; }
.title-right { display: flex; align-items: center; justify-content: flex-end; gap: 20px; padding-right: 10px; }
.signin { gap: 6px; }

/* Menu */
.menubar { display: flex; align-items: center; gap: 20px; padding: 0 4px 0 15px; background: #fafafa; font: 9px/12px "Open Sans", sans-serif; }
.menu { height: 20px; border-bottom: 2px solid transparent; }
.menu.active { font-weight: 700; border-color: #117865; }
.share { display: flex; align-items: center; justify-content: center; gap: 4px; margin-left: auto; width: 54px; height: 16px; border-radius: 2px; background: #117865; color: #fff; font-size: 8px; font-weight: 600; }

/* Ribbon */
.ribbon { display: flex; padding-top: 2px; background: #fafafa; border-bottom: 1px solid #b3b0ad; }
.group { display: flex; flex-direction: column; justify-content: space-between; padding: 2px 4px 0; border-right: 1px solid #d2d0ce; }
.tools { display: flex; justify-content: center; align-items: flex-start; }
.tool { display: block; text-align: center; }
.tool > svg:first-child { display: block; width: 20px; height: 20px; margin: 1px auto 1px; }
.tool.off { color: #b3b0ad; }
.cv { width: 5px; height: 5px; margin-left: 1px; }
.w22 { width: 22px; }
.w26 { width: 26px; }
.w28 { width: 28px; }
.w30 { width: 30px; }
.w35 { width: 35px; }
.w36 { width: 36px; }
.w42 { width: 42px; }
.w47 { width: 48px; padding-left: 2px; padding-right: 2px; }
.w37 { width: 38px; padding-left: 0; padding-right: 0; }
.clip { width: 105px; }
.clip .tools { justify-content: flex-start; gap: 4px; padding-left: 4px; }
.clip-list { display: grid; align-content: start; }
.mini { display: flex; align-items: center; gap: 3px; height: 16px; padding-left: 2px; color: #b3b0ad; }
.mini svg { width: 10px; height: 10px; }
.mini:first-child { height: 13px; }
.group-name { text-align: center; font-size: 7px; line-height: 8px; }
.collapse { align-self: flex-end; margin-left: auto; padding: 0 2px 2px 0; }

/* Workspace */
.workspace { display: grid; grid-template-columns: 27px minmax(0, 1fr) 118px 118px; }
.views { background: #f3f2f1; border-right: 1px solid #e1dfdd; }
.view { display: flex; align-items: center; justify-content: center; width: 100%; height: 26px; padding-right: 2px; border-left: 2px solid transparent; }
.view.on { border-color: #117865; }
.view svg { width: 12px; height: 12px; }
.center { display: grid; grid-template-rows: 1fr 23px; }
.stage { display: grid; grid-template-columns: minmax(0, 1fr) 21px; background: #fff; }
.canvas { padding: 0 16px 4px; border-right: 1px solid #a19f9d; }
.report { height: 100%; display: flex; flex-direction: column; justify-content: space-between; border: 1px dotted #252423; border-top: 0; }
.card-row { display: flex; justify-content: space-between; align-items: flex-start; }
.card { display: flex; flex-direction: column; justify-content: center; align-items: center; width: 155px; height: 149px; padding-top: 6px; background: #cbcbcb; border: 1px solid #bfbfbf; border-top: 0; text-align: center; color: #605e5c; font: 8px/12px "Open Sans", sans-serif; }
.card.tall { height: 175px; }
.card.lower { height: 171px; margin-left: 269px; padding-top: 23px; }
.card strong { color: #1f1e1d; font: 900 33px/36px Inter, "Open Sans", sans-serif; }
.card strong.din { font: 700 36px/40px Roboto, sans-serif; }
.card p { max-width: 140px; }
.filters { display: flex; flex-direction: column; align-items: center; gap: 7px; padding-top: 8px; }
.filters span { writing-mode: vertical-rl; font: 600 9px/12px "Open Sans", sans-serif; }
.flip { transform: scaleX(-1); }
.tabs { display: flex; background: #f3f2f1; }
.device { width: 16px; margin: 0 7px 3px 6px; border-bottom: 2px solid transparent; }
.device.on { border-color: #117865; }
.arrow { width: 15px; }
.device + .arrow { margin-left: -6px; }
.tab { position: relative; width: 69px; background: #fff; border-left: 1px solid #a19f9d; border-bottom: 2px solid transparent; padding-top: 2px; }
.tab.current { width: 40px; border-left-color: #d2d0ce; border-bottom-color: #117865; font-weight: 700; }
.x { position: absolute; top: 0; right: 3px; }
.add { display: flex; align-items: center; justify-content: center; width: 25px; background: #117865; }

/* Panes */
.viz, .data { border-left: 1px solid #d8d6d4; }
.pane-head { display: flex; justify-content: space-between; align-items: center; height: 25px; padding: 0 4px 0 5px; }
.pane-head h2 { font: 600 10px/12px "Open Sans", sans-serif; }
.viz h3 { padding-left: 5px; font-size: 8px; font-weight: 700; }
.modes { display: flex; gap: 22px; padding: 1px 6px 0; }
.mode { display: flex; align-items: center; justify-content: center; width: 20px; height: 20px; }
.mode.on { background: #d8d6d4; }
.rule { height: 10px; padding-left: 10px; border-bottom: 1px solid #979593; line-height: 0; display: flex; align-items: flex-end; }
.gallery { display: grid; grid-template-columns: repeat(6, 1fr); grid-auto-rows: 18px; padding: 5px 4px 0; }
.gallery button { display: flex; align-items: center; justify-content: center; }
.gallery svg { width: 14px; height: 14px; }
.gallery .letter { font: 700 10px/18px "Open Sans", sans-serif; color: #1e6bb0; }
.t123 { font: 600 5px "Open Sans", sans-serif; fill: #1e79c5; text-anchor: middle; }
.wells { margin-top: 3px; padding: 5px 3px 0; border-top: 1px solid #d2d0ce; }
.wells h4 { padding-left: 5px; font-size: 8px; font-weight: 400; }
.wells .drill { margin: 7px 0 1px; font-weight: 700; }
.well { height: 18px; margin-top: 3px; padding-left: 5px; line-height: 16px; background: #fff; border: 1px dotted #b3b0ad; white-space: nowrap; }
.well.inset { padding-left: 7px; }
.switch { display: flex; justify-content: space-between; align-items: center; height: 18px; padding: 0 11px 0 5px; }
.switch input { appearance: none; display: flex; align-items: center; gap: 1px; width: 21px; height: 10px; margin: 0; padding: 0 2px; border: 1px solid #605e5c; border-radius: 5px; background: #fff; font-size: 7px; line-height: 8px; }
.switch input::before { content: ""; width: 5px; height: 5px; border-radius: 50%; background: #3b3a39; }
.switch input::after { content: "Off"; }
.switch input:checked { flex-direction: row-reverse; background: #117865; border-color: #117865; color: #fff; }
.switch input:checked::before { background: #fff; }
.switch input:checked::after { content: "On"; }
.data-search { display: flex; align-items: center; gap: 4px; height: 16px; margin: 5px 2px 5px 3px; padding-left: 7px; background: #fff; border: 1px solid #c8c6c4; border-bottom-color: #8a8886; border-radius: 3px; }
.data-search input { flex: 1; min-width: 0; padding: 0; border: 0; outline: 0; background: none; font-size: 9px; }
.data-search input::placeholder { color: #605e5c; opacity: 1; }
.data ul { list-style: none; }
.data li { display: flex; align-items: center; gap: 3px; height: 16px; padding-left: 9px; white-space: nowrap; }

/* Status bar */
.status { display: flex; align-items: center; justify-content: space-between; padding: 0 3px; border-top: 1px solid #d8d6d4; color: #3b3a39; }
.zoom { display: flex; align-items: center; gap: 4px; }
.zoom input { appearance: none; width: 58px; height: 9px; margin: 0; background: linear-gradient(#605e5c, #605e5c) center / 100% 1px no-repeat, linear-gradient(#605e5c, #605e5c) 40% center / 1px 5px no-repeat; }
.zoom input::-webkit-slider-thumb { appearance: none; width: 2px; height: 7px; background: #252423; }
.pct { margin-left: 4px; }
.fit { margin: 0 5px 0 9px; }

/* Taskbar */
.taskbar { display: grid; grid-template-columns: 1fr auto 1fr; align-items: center; background: linear-gradient(90deg, #172a36, #162b35 60%, #142832); border-top: 1px solid #2b2528; color: #fff; }
.weather { justify-content: flex-start; gap: 2px; padding-left: 13px; text-align: left; }
.badge4 { font: 7px "Open Sans", sans-serif; fill: #252423; text-anchor: middle; }
.apps { display: flex; align-items: center; gap: 2px; padding-right: 18px; }
.app { position: relative; display: flex; align-items: center; justify-content: center; width: 27px; height: 27px; border-radius: 3px; }
.app svg { width: 17px; height: 17px; }
.run::after, .open::after { content: ""; position: absolute; bottom: 0; left: 12px; width: 4px; height: 2px; border-radius: 1px; background: #a7adb1; }
.open { background: #2b3439; }
.open::after { left: 8px; width: 10px; background: #4cc2ff; }
.count { position: absolute; top: 1px; right: 0; width: 12px; height: 11px; border-radius: 6px; background: #4cc2ff; color: #16222a; line-height: 11px; }
.task-search { display: flex; align-items: center; gap: 6px; width: 143px; height: 22px; padding: 0 3px 0 8px; border: 1px solid #4a5a63; border-radius: 11px; background: #36454e; }
.task-search input { flex: 1; min-width: 0; padding: 0; border: 0; outline: 0; background: none; font-size: 9px; }
.task-search input::placeholder { color: #fff; opacity: 1; }
.tray { display: flex; align-items: center; justify-content: flex-end; gap: 10px; padding-right: 12px; }
.sys { display: flex; gap: 4px; }
.clock { text-align: right; }
.watermark { position: absolute; left: 1px; bottom: 0; pointer-events: none; }
```
